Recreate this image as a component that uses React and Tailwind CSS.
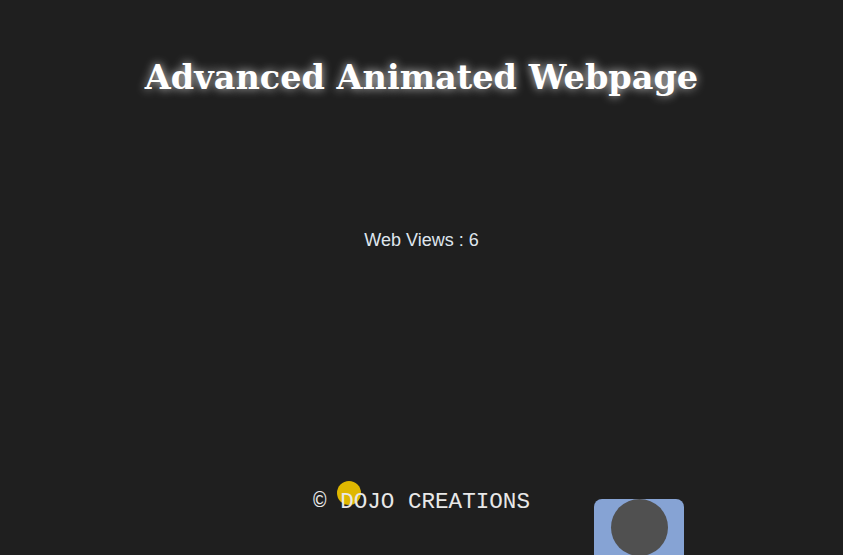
export default function App() {
  return (
    <div className="relative w-full h-[555px] overflow-hidden bg-[#1f1f1f] flex flex-col items-center">
      <h1
        className="mt-[55px] text-[33.5px] leading-[46px] font-bold text-white [text-shadow:0_0_10px_rgba(255,255,255,0.8)]"
        style={{ fontFamily: '"DejaVu Serif", Georgia, serif' }}
      >
        Advanced Animated Webpage
      </h1>
      <p className="mt-[127px] text-[18px] leading-[24px] text-[#dfe6ee]" style={{ fontFamily: '"Liberation Sans", Arial, sans-serif' }}>
        Web Views : 6
      </p>
      <div className="absolute left-[337px] top-[481px] w-[24px] h-[24px] rounded-full bg-[#dfb700]" />
      <p
        className="absolute left-0 right-0 top-[488px] text-center text-[22.6px] leading-[28px] text-[#e8e8e8]"
        style={{ fontFamily: '"Liberation Mono", "Courier New", monospace' }}
      >
        © DOJO CREATIONS
      </p>
      <div className="absolute left-[594px] top-[499px] w-[90px] h-[70px] rounded-[8px] bg-[#86a3d4] flex justify-center">
        <div className="w-[57px] h-[57px] rounded-full bg-[#505050]" />
      </div>
    </div>
  );
}
